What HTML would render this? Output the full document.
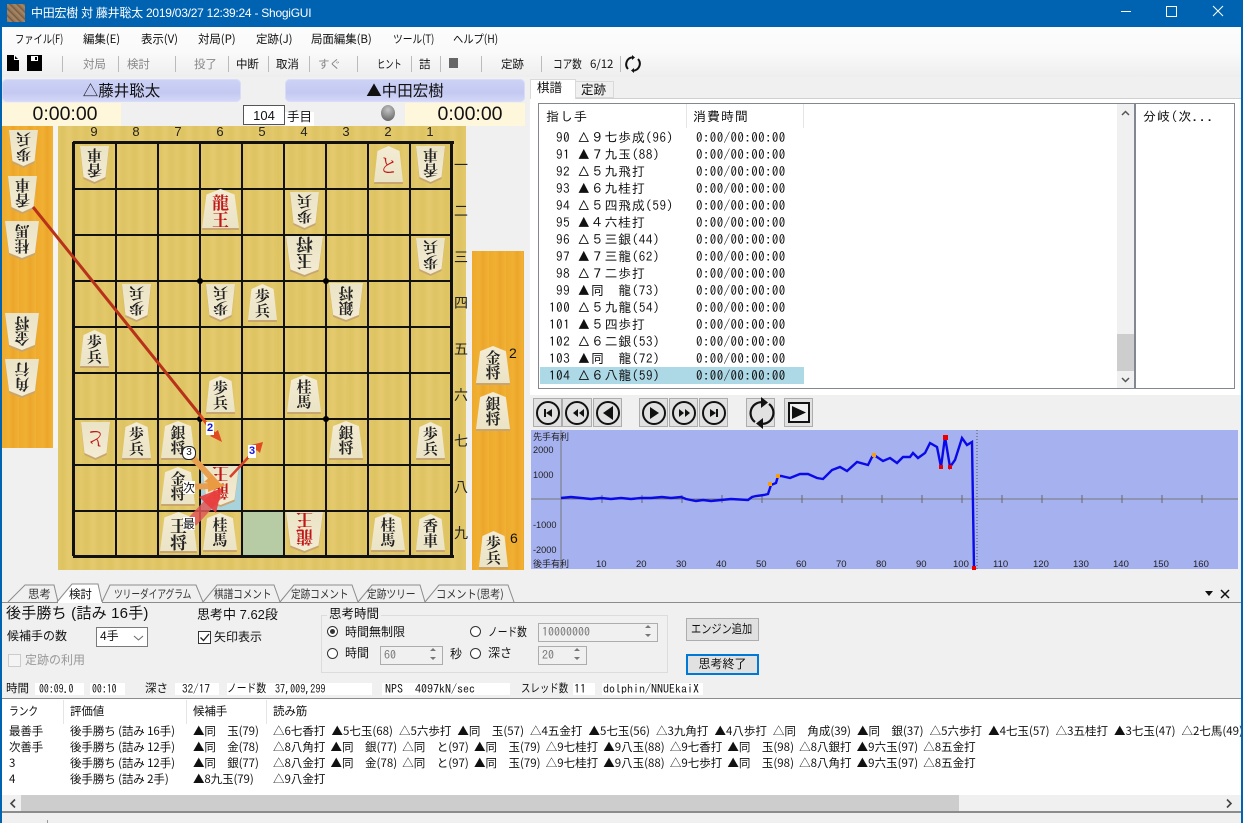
<!DOCTYPE html>
<html lang="ja"><head><meta charset="utf-8"><title>ShogiGUI</title>
<style>
html,body{margin:0;padding:0}
body{width:1243px;height:823px;overflow:hidden;position:relative;background:#f0f0f0;font:12px "Liberation Sans","Noto Sans CJK JP",sans-serif;color:#111}
div,span,b,i,svg,pre{position:absolute}
.t{white-space:nowrap;line-height:16px}
.g1{color:#888}
.wood{background:repeating-linear-gradient(90deg,#e1c768 0,#dec362 5px,#e4cb6e 11px,#dec364 17px,#e3c96b 24px)}
.hand{background:repeating-linear-gradient(90deg,#eeaa2c 0,#f0b033 7px,#eba62a 11px,#f1b236 17px)}
.v{width:2px;background:#111;top:142px;height:414px}
.h{height:2px;background:#111;left:73px;width:378px}
.n{font:13px "Liberation Sans",sans-serif;color:#222;width:20px;text-align:center;top:124px}
.k{font:14px "Noto Sans CJK JP",sans-serif;color:#222;left:453px;width:16px;text-align:center}
.dot{width:6px;height:6px;border-radius:3px;background:#000}
b{display:block;filter:drop-shadow(0 2px 0 #c8a671);font-weight:400}
b i{display:block;width:100%;height:100%;font-style:normal;background:linear-gradient(#f3ecd4,#ebe3c5);text-align:center;color:#222;font-family:"Noto Serif CJK SC","Noto Sans CJK JP",serif;font-weight:700;clip-path:polygon(50% 0,88% 14%,100% 100%,0 100%,12% 14%);padding-top:4px;box-sizing:border-box;line-height:15px;font-size:15px}
b.f i{transform:rotate(180deg)}
b.s{width:29px;height:36px;margin:-18px 0 0 -14px}
b.m{width:34px;height:37px;margin:-19px 0 0 -17px}
b.l{width:37px;height:39px;margin:-20px 0 0 -18px}
b.l i{font-size:17px;line-height:17px}
b.r i{color:#c01818}
b i.to{line-height:30px;font-size:19px;font-weight:400}
.btn{background:#e1e1e1;border:1px solid #adadad;box-sizing:border-box;text-align:center;white-space:nowrap}
.sep{width:1px;height:16px;top:56px;background:#bbb}
.lst{font:13px "IPAGothic","Noto Sans CJK JP",monospace;white-space:pre;line-height:17px;letter-spacing:.6px;margin:0}
.rd{width:11px;height:11px;border:1px solid #333;border-radius:50%;background:#fff;box-sizing:border-box}
.spin{background:#f0f0f0;border:1px solid #adadad;box-sizing:border-box;color:#777;font:12px "IPAGothic",monospace;padding-left:3px;line-height:17px}
.mono{font:12px "IPAGothic","Noto Sans CJK JP",monospace;white-space:pre;line-height:16px}
.wb{background:#fff;height:12px;top:683px}
.tb{font:11.5px "Noto Sans CJK JP",sans-serif;white-space:nowrap;line-height:16px;letter-spacing:-.1px}
.pv{word-spacing:3.5px;letter-spacing:0}
.pv2{word-spacing:2.6px;letter-spacing:0}
.sx{transform-origin:0 0}
</style></head><body>

<!-- title bar -->
<div style="left:0;top:0;width:1243px;height:27px;background:#0063b1"></div>
<div style="left:7px;top:4px;width:18px;height:18px;background:repeating-linear-gradient(45deg,#8a6a4a 0,#a88a6a 3px,#6c5038 5px)"></div>
<span class="t" style="left:31px;top:5px;color:#fff;font-size:12px;letter-spacing:-.25px">中田宏樹 対 藤井聡太 2019/03/27 12:39:24 - ShogiGUI</span>
<div style="left:1121px;top:11px;width:10px;height:1px;background:#fff"></div>
<div style="left:1166px;top:6px;width:9px;height:9px;border:1px solid #fff"></div>
<svg style="left:1212px;top:5px" width="12" height="12"><path d="M1 1L11 11M11 1L1 11" stroke="#fff" stroke-width="1"/></svg>
<div style="left:0;top:27px;width:2px;height:796px;background:#0063b1"></div>
<div style="left:1241px;top:27px;width:2px;height:796px;background:#0063b1"></div>

<!-- menu + toolbar -->
<div style="left:2px;top:27px;width:1239px;height:50px;background:linear-gradient(#fcfcfc 0,#fafafa 50%,#eeeeee 100%)"></div>
<span class="tb sx" style="left:15px;top:31px;transform:scaleX(.81)">ファイル(F)</span>
<span class="tb" style="left:83px;top:31px">編集(E)</span>
<span class="tb" style="left:141px;top:31px">表示(V)</span>
<span class="tb" style="left:198px;top:31px">対局(P)</span>
<span class="tb" style="left:256px;top:31px">定跡(J)</span>
<span class="tb" style="left:311px;top:31px">局面編集(B)</span>
<span class="tb sx" style="left:393px;top:31px;transform:scaleX(.85)">ツール(T)</span>
<span class="tb sx" style="left:453px;top:31px;transform:scaleX(.9)">ヘルプ(H)</span>

<svg style="left:6px;top:55px" width="14" height="16"><path d="M1 0H8L13 5V16H1Z" fill="#000"/><path d="M8.5 0V4.5H13" fill="none" stroke="#fff"/></svg>
<svg style="left:27px;top:55px" width="15" height="16"><path d="M0 0H15V16H0Z" fill="#000"/><rect x="4" y="1" width="7" height="5" fill="#fff"/><rect x="8" y="2" width="2" height="3" fill="#000"/></svg>
<i class="sep" style="left:62px"></i>
<span class="tb g1" style="left:83px;top:56px">対局</span><i class="sep" style="left:118px"></i>
<span class="tb g1" style="left:127px;top:56px">検討</span>
<i class="sep" style="left:175px"></i>
<span class="tb g1" style="left:194px;top:56px">投了</span><i class="sep" style="left:228px"></i>
<span class="tb" style="left:236px;top:56px">中断</span><i class="sep" style="left:268px"></i>
<span class="tb" style="left:276px;top:56px">取消</span><i class="sep" style="left:309px"></i>
<span class="tb g1" style="left:318px;top:56px">すぐ</span><i class="sep" style="left:357px"></i>
<span class="tb sx" style="left:377px;top:56px;transform:scaleX(.72)">ヒント</span><i class="sep" style="left:411px"></i>
<span class="tb" style="left:419px;top:56px">詰</span><i class="sep" style="left:440px"></i>
<div style="left:449px;top:58px;width:9px;height:10px;background:#666"></div><i class="sep" style="left:481px"></i>
<span class="tb" style="left:501px;top:56px">定跡</span><i class="sep" style="left:541px"></i>
<span class="tb sx" style="left:553px;top:56px;transform:scaleX(.84)">コア数</span>
<span class="tb" style="left:590px;top:56px">6/12</span><i class="sep" style="left:620px"></i>
<svg style="left:624px;top:55px" width="18" height="18" fill="none" stroke="#111" stroke-width="2"><path d="M4 14A7 7 0 0 1 8 2.4"/><path d="M14 4A7 7 0 0 1 10 15.6"/><path d="M8 0V5L11 2.5ZM10 18V13L7 15.5Z" fill="#111" stroke="none"/></svg>

<!-- player bars -->
<div style="left:2px;top:79px;width:239px;height:23px;border-radius:5px;background:linear-gradient(#cdd2f6,#c4c9f2 60%,#d4d8f8);box-shadow:inset 0 0 0 1px #d8dcf8"></div>
<div style="left:285px;top:79px;width:240px;height:23px;border-radius:5px;background:linear-gradient(#cdd2f6,#c4c9f2 60%,#d4d8f8);box-shadow:inset 0 0 0 1px #d8dcf8"></div>
<span class="t" style="left:2px;width:239px;text-align:center;top:81px;font:15.5px/19px 'Noto Sans CJK JP',sans-serif">△藤井聡太</span>
<span class="t" style="left:285px;width:240px;text-align:center;top:81px;font:15.5px/19px 'Noto Sans CJK JP',sans-serif">▲中田宏樹</span>
<div style="left:2px;top:103px;width:119px;height:23px;background:#fff7dc"></div>
<div style="left:405px;top:103px;width:120px;height:23px;background:#fff7dc"></div>
<span class="t" style="left:2px;width:126px;text-align:center;top:104px;font-size:19.5px;line-height:21px">0:00:00</span>
<span class="t" style="left:411px;width:118px;text-align:center;top:104px;font-size:19.5px;line-height:21px">0:00:00</span>
<div style="left:243px;top:105px;width:42px;height:20px;background:#fff;border:1px solid #555;box-sizing:border-box;text-align:center;line-height:19px;font-size:13px">104</div>
<div style="left:285px;top:112px;width:29px;height:14px;background:#fff"></div>
<span class="t" style="left:287px;top:109px;font-size:12.5px">手目</span>
<div style="left:381px;top:105px;width:14px;height:16px;border-radius:50%;background:radial-gradient(circle at 50% 30%,#c4c4c4,#777 70%,#555)"></div>

<!-- left hand -->
<div class="hand" style="left:2px;top:126px;width:51px;height:322px"></div>
<div style="left:53px;top:126px;width:5px;height:322px;background:#f4f4f4"></div>
<!-- board -->
<div class="wood" style="left:58px;top:126px;width:408px;height:447px"></div>
<div style="left:241px;top:510px;width:42px;height:46px;background:#b7cba4"></div>
<div style="left:199px;top:464px;width:42px;height:46px;background:#a9d3dc"></div>

<i class="v" style="left:72px;width:3px"></i><i class="v" style="left:115px"></i><i class="v" style="left:157px"></i><i class="v" style="left:199px"></i><i class="v" style="left:241px"></i><i class="v" style="left:283px"></i><i class="v" style="left:325px"></i><i class="v" style="left:367px"></i><i class="v" style="left:409px"></i><i class="v" style="left:450px;width:3px"></i>
<i class="h" style="top:141px;height:3px;width:381px"></i><i class="h" style="top:188px"></i><i class="h" style="top:234px"></i><i class="h" style="top:280px"></i><i class="h" style="top:326px"></i><i class="h" style="top:372px"></i><i class="h" style="top:418px"></i><i class="h" style="top:464px"></i><i class="h" style="top:510px"></i><i class="h" style="top:555px;height:3px;width:381px"></i>
<i class="dot" style="left:197px;top:278px"></i><i class="dot" style="left:323px;top:278px"></i><i class="dot" style="left:197px;top:416px"></i><i class="dot" style="left:323px;top:416px"></i>

<span class="n" style="left:84px">9</span><span class="n" style="left:126px">8</span><span class="n" style="left:168px">7</span><span class="n" style="left:210px">6</span><span class="n" style="left:252px">5</span><span class="n" style="left:294px">4</span><span class="n" style="left:336px">3</span><span class="n" style="left:378px">2</span><span class="n" style="left:420px">1</span>
<span class="k" style="top:155px">一</span><span class="k" style="top:201px">二</span><span class="k" style="top:247px">三</span><span class="k" style="top:293px">四</span><span class="k" style="top:339px">五</span><span class="k" style="top:385px">六</span><span class="k" style="top:431px">七</span><span class="k" style="top:477px">八</span><span class="k" style="top:523px">九</span>

<!-- board pieces -->
<b class="s f" style="left:94px;top:164px"><i>香<br>車</i></b>
<b class="s r" style="left:388px;top:164px"><i class="to">と</i></b>
<b class="s f" style="left:430px;top:164px"><i>香<br>車</i></b>
<b class="l r" style="left:220px;top:209px"><i>龍<br>王</i></b>
<b class="s f" style="left:304px;top:210px"><i>歩<br>兵</i></b>
<b class="l f" style="left:304px;top:256px"><i>玉<br>将</i></b>
<b class="s f" style="left:430px;top:256px"><i>歩<br>兵</i></b>
<b class="s f" style="left:136px;top:302px"><i>歩<br>兵</i></b>
<b class="s f" style="left:220px;top:302px"><i>歩<br>兵</i></b>
<b class="s" style="left:262px;top:302px"><i>歩<br>兵</i></b>
<b class="m f" style="left:346px;top:302px"><i>銀<br>将</i></b>
<b class="s" style="left:94px;top:348px"><i>歩<br>兵</i></b>
<b class="s" style="left:220px;top:394px"><i>歩<br>兵</i></b>
<b class="m" style="left:304px;top:394px"><i>桂<br>馬</i></b>
<b class="s f r" style="left:95px;top:440px"><i class="to">と</i></b>
<b class="s" style="left:136px;top:440px"><i>歩<br>兵</i></b>
<b class="m" style="left:178px;top:440px"><i>銀<br>将</i></b>
<b class="m" style="left:346px;top:440px"><i>銀<br>将</i></b>
<b class="s" style="left:430px;top:440px"><i>歩<br>兵</i></b>
<b class="m" style="left:178px;top:486px"><i>金<br>将</i></b>
<b class="l f r" style="left:220px;top:486px"><i>龍<br>王</i></b>
<b class="l" style="left:178px;top:532px"><i>王<br>将</i></b>
<b class="m" style="left:220px;top:532px"><i>桂<br>馬</i></b>
<b class="l f r" style="left:304px;top:532px"><i>龍<br>王</i></b>
<b class="m" style="left:388px;top:532px"><i>桂<br>馬</i></b>
<b class="s" style="left:430px;top:532px"><i>香<br>車</i></b>

<!-- gote hand -->
<b class="s f" style="left:23px;top:148px"><i>歩<br>兵</i></b>
<b class="s f" style="left:22px;top:194px"><i>香<br>車</i></b>
<b class="m f" style="left:22px;top:240px"><i>桂<br>馬</i></b>
<b class="m f" style="left:22px;top:332px"><i>金<br>将</i></b>
<b class="m f" style="left:22px;top:378px"><i>角<br>行</i></b>

<!-- sente hand -->
<div class="hand" style="left:472px;top:251px;width:52px;height:322px"></div>
<b class="m" style="left:493px;top:365px"><i>金<br>将</i></b>
<b class="m" style="left:493px;top:411px"><i>銀<br>将</i></b>
<b class="s" style="left:493px;top:549px"><i>歩<br>兵</i></b>
<span class="t" style="left:509px;top:345px;font-size:14px;color:#111">2</span>
<span class="t" style="left:510px;top:530px;font-size:14px;color:#111">6</span>

<!-- arrows -->
<svg style="left:0;top:0" width="530" height="580" fill="none">
 <path d="M33 207L200 415" stroke="#b8321a" stroke-width="3"/>
 <path d="M200 415L216 436" stroke="#e04a20" stroke-width="3"/>
 <path d="M222 442L210 436L218 430Z" fill="#e04a20"/>
 <path d="M230 477L258 447" stroke="#d8402a" stroke-width="2.5"/>
 <path d="M263 442L251 445L260 453Z" fill="#e04a20"/>
 <path d="M193 458L217 484" stroke="#e8a050" stroke-width="6"/>
 <path d="M224 487L204 482L212 475Z" fill="#ea9a40"/>
 <path d="M188 487L210 486" stroke="#e8a050" stroke-width="6"/>
 <path d="M226 485L208 480V492Z" fill="#ea9a40"/>
 <path d="M192 522L218 494" stroke="#e05858" stroke-width="11" opacity=".85"/>
 <path d="M222 488L199 497L216 513Z" fill="#e83c3c" opacity=".9"/>
</svg>
<span class="t" style="left:206px;top:422px;background:#fff;color:#1616d8;font:bold 11px/13px 'Liberation Sans',sans-serif;padding:0 1px">2</span>
<span class="t" style="left:248px;top:445px;background:#fff;color:#1616d8;font:bold 11px/13px 'Liberation Sans',sans-serif;padding:0 1px">3</span>
<span class="t" style="left:182px;top:446px;width:12px;height:12px;background:#fff;border-radius:6px;border:1px solid #222;font:10px/12px 'Liberation Sans',sans-serif;text-align:center">3</span>
<span class="t" style="left:183px;top:481px;background:#fff;font:12px/13px 'Noto Sans CJK JP',sans-serif">次</span>
<span class="t" style="left:183px;top:517px;background:#fff;font:12px/13px 'Noto Sans CJK JP',sans-serif">最</span>

<!-- kifu tabs -->
<div style="left:530px;top:98px;width:711px;height:1px;background:#d0d0d0"></div>
<div style="left:575px;top:81px;width:39px;height:17px;background:#f0f0f0;border:1px solid #d9d9d9;box-sizing:border-box"></div>
<div style="left:530px;top:79px;width:46px;height:20px;background:#fff;border:1px solid #d9d9d9;border-bottom:0;box-sizing:border-box"></div>
<span class="t" style="left:537px;top:80px;font-size:12.5px">棋譜</span>
<span class="t" style="left:581px;top:82px;font-size:12.5px">定跡</span>
<div style="left:530px;top:99px;width:711px;height:296px;background:#fff"></div>
<!-- kifu list -->
<div style="left:538px;top:103px;width:597px;height:286px;background:#fff;border:1px solid #828790;box-sizing:border-box"></div>
<div style="left:1135px;top:103px;width:100px;height:286px;background:#fff;border:1px solid #828790;box-sizing:border-box"></div>
<span class="lst" style="left:1143px;top:108px;letter-spacing:1px">分岐(次...</span>
<div style="left:686px;top:104px;width:1px;height:24px;background:#e5e5e5"></div>
<div style="left:803px;top:104px;width:1px;height:24px;background:#e5e5e5"></div>
<span class="lst" style="left:546px;top:108px;letter-spacing:1px">指し手</span>
<span class="lst" style="left:693px;top:108px;letter-spacing:1px">消費時間</span>
<div style="left:540px;top:367px;width:264px;height:17px;background:#add8e6"></div>
<pre class="lst" style="left:556px;top:129px">90 △９七歩成(96)
91 ▲７九玉(88)
92 △５九飛打
93 ▲６九桂打
94 △５四飛成(59)
95 ▲４六桂打
96 △５三銀(44)
97 ▲７三龍(62)
98 △７二歩打
99 ▲同　龍(73)</pre>
<pre class="lst" style="left:549px;top:299px">100 △５九龍(54)
101 ▲５四歩打
102 △６二銀(53)
103 ▲同　龍(72)
104 △６八龍(59)</pre>
<pre class="lst" style="left:696px;top:129px;letter-spacing:.4px">0:00/00:00:00
0:00/00:00:00
0:00/00:00:00
0:00/00:00:00
0:00/00:00:00
0:00/00:00:00
0:00/00:00:00
0:00/00:00:00
0:00/00:00:00
0:00/00:00:00
0:00/00:00:00
0:00/00:00:00
0:00/00:00:00
0:00/00:00:00
0:00/00:00:00</pre>
<!-- list scrollbar -->
<div style="left:1117px;top:104px;width:17px;height:284px;background:#f0f0f0"></div>
<div style="left:1117px;top:334px;width:17px;height:37px;background:#cdcdcd"></div>
<svg style="left:1117px;top:104px" width="17" height="284" fill="none" stroke="#555" stroke-width="1.5"><path d="M5 11L8.5 7.5L12 11"/><path d="M5 274L8.5 277.5L12 274"/></svg>

<!-- playback -->
<div class="btn" style="left:533px;top:398px;width:29px;height:29px"></div>
<div class="btn" style="left:562px;top:398px;width:30px;height:29px"></div>
<div class="btn" style="left:593px;top:398px;width:29px;height:29px"></div>
<div class="btn" style="left:639px;top:398px;width:29px;height:29px"></div>
<div class="btn" style="left:669px;top:398px;width:29px;height:29px"></div>
<div class="btn" style="left:699px;top:398px;width:29px;height:29px"></div>
<div class="btn" style="left:746px;top:398px;width:29px;height:29px"></div>
<div class="btn" style="left:784px;top:398px;width:29px;height:29px"></div>
<svg style="left:530px;top:395px" width="290" height="36" fill="#111">
 <g fill="none" stroke="#111" stroke-width="2"><circle cx="18" cy="18" r="11"/><circle cx="47" cy="18" r="11"/><circle cx="78" cy="18" r="11"/><circle cx="124" cy="18" r="11"/><circle cx="154" cy="18" r="11"/><circle cx="184" cy="18" r="11"/></g>
 <path d="M14 14h2v8h-2ZM22 14v8l-6-4Z"/>
 <path d="M48 14v8l-5-4ZM54 14v8l-5-4Z"/>
 <path d="M83 11v14l-10-7Z"/>
 <path d="M120 12v12l9-6Z"/>
 <path d="M149 14v8l5-4ZM155 14v8l5-4Z"/>
 <path d="M180 14v8l6-4ZM186 14h2v8h-2Z"/>
 <g fill="none" stroke="#111" stroke-width="2.2"><path d="M225 27A11 11 0 0 1 232 7.2"/><path d="M239 9A11 11 0 0 1 232 28.8"/></g>
 <path d="M231 2V13L238 7.5ZM233 34V23L226 28.5Z"/>
 <rect x="259" y="8" width="20" height="19" fill="#eee" stroke="#111" stroke-width="2"/>
 <path d="M262 11V24L276 17.5Z"/>
</svg>

<!-- graph -->
<svg style="left:531px;top:430px" width="707" height="140" font-family="Liberation Sans,Noto Sans CJK JP,sans-serif" font-size="9.2" fill="#222">
 <rect width="707" height="139" fill="#a6b1ef"/>
 <path d="M0 69H707" stroke="#777" stroke-width="1"/>
 <path d="M30 0V139" stroke="#777" stroke-width="1"/>
 <path d="M446 0V139" stroke="#555" stroke-dasharray="1 2"/>
 <path d="M71 65v8M111 65v8M151 65v8M191 65v8M231 65v8M271 65v8M311 65v8M351 65v8M391 65v8M431 65v8M471 65v8M511 65v8M551 65v8M591 65v8M631 65v8M671 65v8" stroke="#666"/>
 <text x="2" y="10" font-size="9">先手有利</text>
 <text x="2" y="137" font-size="9">後手有利</text>
 <text x="2" y="23">2000</text><text x="2" y="48">1000</text><text x="2" y="98">-1000</text><text x="2" y="123">-2000</text>
 <g font-size="9.5"><text x="65" y="137">10</text><text x="105" y="137">20</text><text x="145" y="137">30</text><text x="185" y="137">40</text><text x="225" y="137">50</text><text x="265" y="137">60</text><text x="305" y="137">70</text><text x="345" y="137">80</text><text x="385" y="137">90</text><text x="422" y="137">100</text><text x="462" y="137">110</text><text x="502" y="137">120</text><text x="542" y="137">130</text><text x="582" y="137">140</text><text x="622" y="137">150</text><text x="662" y="137">160</text></g>
 <path d="M30 68L40 67L50 68L60 69L70 68L80 69L90 68L100 69L110 68L120 68L131 67L140 68L150 67L155 69L165 71L172 70L180 71L190 70L200 69L217 70L221 67L225 66L233 65L237 64L240 55L245 53L247 46L250 46L259 48L269 44L277 44L286 48L292 49L301 40L309 37L316 41L326 32L337 35L341 27L343 25L352 31L359 28L366 33L372 27L379 27L382 23L387 28L394 23L399 13L406 17L410 37L414 7L419 37L424 30L431 8L436 15L441 12L443 139" fill="none" stroke="#0a0ae8" stroke-width="2.4"/>
 <g fill="#f5a010"><rect x="237" y="52" width="4" height="4"/><rect x="245" y="44" width="4" height="4"/><rect x="341" y="23" width="4" height="4"/></g>
 <g fill="#e80000"><rect x="412" y="5" width="5" height="5"/><rect x="408" y="35" width="4" height="4"/><rect x="417" y="35" width="4" height="4"/><rect x="441" y="136" width="4" height="4"/></g>
</svg>

<!-- lower tabs -->
<div style="left:2px;top:570px;width:1239px;height:253px;background:#f0f0f0"></div>
<svg style="left:0;top:582px" width="530" height="22" fill="#f0f0f0" stroke="#8c8c8c">
 <path d="M8 20L25 3H54L58 20"/>
 <path d="M102 20L110 3H196L203 20"/>
 <path d="M203 20L217 3H274L280 20"/>
 <path d="M280 20L294 3H352L358 20"/>
 <path d="M358 20L372 3H420L425 20"/>
 <path d="M425 20L439 3H508L514 20"/>
 <path d="M57 20L72 2H98L102 20" fill="#fff"/>
</svg>
<div style="left:2px;top:602px;width:1239px;height:1px;background:#8c8c8c"></div>
<div style="left:58px;top:602px;width:44px;height:1px;background:#fff"></div>
<span class="tb" style="left:28px;top:586px;color:#333">思考</span>
<span class="tb" style="left:69px;top:586px">検討</span>
<span class="tb sx" style="left:114px;top:586px;color:#333;transform:scaleX(.76)">ツリーダイアグラム</span>
<span class="tb sx" style="left:214px;top:586px;color:#333;transform:scaleX(.84)">棋譜コメント</span>
<span class="tb sx" style="left:291px;top:586px;color:#333;transform:scaleX(.84)">定跡コメント</span>
<span class="tb sx" style="left:367px;top:586px;color:#333;transform:scaleX(.85)">定跡ツリー</span>
<span class="tb sx" style="left:436px;top:586px;color:#333;transform:scaleX(.89)">コメント(思考)</span>
<svg style="left:1204px;top:588px" width="26" height="12"><path d="M1 3H9L5 8Z" fill="#111"/><path d="M17 2L25 10M25 2L17 10" stroke="#111" stroke-width="1.5"/></svg>

<!-- engine panel -->
<span class="t" style="left:6px;top:605px;font-size:15px;line-height:18px;letter-spacing:.2px">後手勝ち (詰み 16手)</span>
<span class="t" style="left:7px;top:628px;font-size:12px">候補手の数</span>
<div style="left:96px;top:627px;width:52px;height:20px;background:#fff;border:1px solid #7a7a7a;box-sizing:border-box;font-size:12px;line-height:17px;padding-left:3px">4手</div>
<svg style="left:133px;top:635px" width="11" height="6" fill="none" stroke="#666"><path d="M1 1L5.5 5L10 1"/></svg>
<div style="left:8px;top:654px;width:13px;height:13px;border:1px solid #ccc;background:#f4f4f4;box-sizing:border-box"></div>
<span class="t" style="left:25px;top:652px;font-size:12px;color:#999">定跡の利用</span>
<span class="t" style="left:197px;top:607px;font-size:13px">思考中 7.62段</span>
<div style="left:198px;top:631px;width:13px;height:13px;border:1px solid #333;background:#fff;box-sizing:border-box"></div>
<svg style="left:198px;top:631px" width="13" height="13" fill="none" stroke="#222" stroke-width="1.3"><path d="M2.5 6.5L5.5 9.5L11 3"/></svg>
<span class="t" style="left:214px;top:629px;font-size:12px">矢印表示</span>

<div style="left:321px;top:615px;width:347px;height:58px;border:1px solid #dcdcdc;box-sizing:border-box"></div>
<span class="t" style="left:327px;top:606px;background:#f0f0f0;padding:0 2px;font-size:12.5px">思考時間</span>
<i class="rd" style="left:327px;top:626px"></i><i style="left:330px;top:629px;width:5px;height:5px;border-radius:50%;background:#333"></i>
<span class="t" style="left:345px;top:624px;font-size:12px">時間無制限</span>
<i class="rd" style="left:327px;top:648px"></i>
<span class="t" style="left:345px;top:645px;font-size:12px">時間</span>
<div class="spin" style="left:380px;top:646px;width:63px;height:19px">60</div>
<span class="t" style="left:450px;top:646px;font-size:12px">秒</span>
<i class="rd" style="left:470px;top:626px"></i>
<span class="t sx" style="left:488px;top:624px;font-size:12px;transform:scaleX(.81)">ノード数</span>
<i class="rd" style="left:470px;top:648px"></i>
<span class="t" style="left:488px;top:645px;font-size:12px">深さ</span>
<div class="spin" style="left:538px;top:623px;width:120px;height:19px">10000000</div>
<div class="spin" style="left:538px;top:646px;width:49px;height:19px">20</div>
<svg style="left:320px;top:620px" width="350" height="50" fill="#777"><path d="M325 8l3-3l3 3ZM325 14l3 3l3-3Z"/><path d="M110 31l3-3l3 3ZM110 37l3 3l3-3Z"/><path d="M254 31l3-3l3 3ZM254 37l3 3l3-3Z"/></svg>
<div class="btn" style="left:686px;top:618px;width:73px;height:23px"></div>
<span class="t sx" style="left:691px;top:621px;font-size:12px;transform:scaleX(.85)">エンジン追加</span>
<div class="btn" style="left:686px;top:654px;width:73px;height:21px;line-height:17px;font-size:12px;border:2px solid #0078d7">思考終了</div>

<!-- status row -->
<div class="wb" style="left:35px;width:49px"></div><div class="wb" style="left:90px;width:35px"></div>
<div class="wb" style="left:175px;width:44px"></div><div class="wb" style="left:227px;width:145px"></div>
<div class="wb" style="left:382px;width:128px"></div><div class="wb" style="left:573px;width:22px"></div><div class="wb" style="left:602px;width:101px"></div>
<span class="t" style="left:6px;top:681px;font-size:11.5px">時間</span>
<span class="mono sx" style="left:39px;top:681px;transform:scaleX(.82)">00:09.0</span>
<span class="mono sx" style="left:92px;top:681px;transform:scaleX(.82)">00:10</span>
<span class="t" style="left:145px;top:681px;font-size:11.5px">深さ</span>
<span class="mono sx" style="left:182px;top:681px;transform:scaleX(.93)">32/17</span>
<span class="t sx" style="left:227px;top:681px;font-size:11.5px;transform:scaleX(.85)">ノード数</span>
<span class="mono sx" style="left:275px;top:681px;transform:scaleX(.84)">37,009,299</span>
<span class="mono" style="left:385px;top:681px">NPS  4097kN/sec</span>
<span class="t sx" style="left:521px;top:681px;font-size:11.5px;transform:scaleX(.82)">スレッド数</span>
<span class="mono" style="left:574px;top:681px">11</span>
<span class="mono" style="left:603px;top:681px">dolphin/NNUEkaiX</span>

<!-- pv table -->
<div style="left:2px;top:698px;width:1239px;height:115px;background:#fff;border-top:1px solid #8c8c8c;border-bottom:2px solid #8c8c8c;box-sizing:border-box"></div>
<div style="left:63px;top:700px;width:1px;height:24px;background:#e5e5e5"></div>
<div style="left:186px;top:700px;width:1px;height:24px;background:#e5e5e5"></div>
<div style="left:266px;top:700px;width:1px;height:24px;background:#e5e5e5"></div>
<span class="tb sx" style="left:9px;top:703px;transform:scaleX(.85)">ランク</span><span class="tb" style="left:70px;top:703px">評価値</span><span class="tb" style="left:193px;top:703px">候補手</span><span class="tb" style="left:273px;top:703px">読み筋</span>
<div style="left:0;top:723px;width:1241px;height:72px;overflow:hidden;font:11.5px 'Noto Sans CJK JP',sans-serif">
 <span class="tb" style="left:9px;top:0">最善手</span><span class="tb" style="left:70px;top:0">後手勝ち (詰み 16手)</span><span class="tb" style="left:193px;top:0">▲同　玉(79)</span>
 <span class="tb pv" style="left:273px;top:0">△6七香打 ▲5七玉(68) △5六歩打 ▲同　玉(57) △4五金打 ▲5七玉(56) △3九角打 ▲4八歩打 △同　角成(39) ▲同　銀(37) △5六歩打 ▲4七玉(57) △3五桂打 ▲3七玉(47) △2七馬(49)</span>
 <span class="tb" style="left:9px;top:16px">次善手</span><span class="tb" style="left:70px;top:16px">後手勝ち (詰み 12手)</span><span class="tb" style="left:193px;top:16px">▲同　金(78)</span>
 <span class="tb pv2" style="left:273px;top:16px">△8八角打 ▲同　銀(77) △同　と(97) ▲同　玉(79) △9七桂打 ▲9八玉(88) △9七香打 ▲同　玉(98) △8八銀打 ▲9六玉(97) △8五金打</span>
 <span class="tb" style="left:9px;top:32px">3</span><span class="tb" style="left:70px;top:32px">後手勝ち (詰み 12手)</span><span class="tb" style="left:193px;top:32px">▲同　銀(77)</span>
 <span class="tb pv2" style="left:273px;top:32px">△8八金打 ▲同　金(78) △同　と(97) ▲同　玉(79) △9七桂打 ▲9八玉(88) △9七歩打 ▲同　玉(98) △8八角打 ▲9六玉(97) △8五金打</span>
 <span class="tb" style="left:9px;top:48px">4</span><span class="tb" style="left:70px;top:48px">後手勝ち (詰み 2手)</span><span class="tb" style="left:193px;top:48px">▲8九玉(79)</span>
 <span class="tb pv" style="left:273px;top:48px">△9八金打</span>
</div>
<div style="left:2px;top:795px;width:1239px;height:16px;background:#f0f0f0"></div>
<div style="left:21px;top:795px;width:938px;height:16px;background:#cdcdcd"></div>
<svg style="left:6px;top:798px" width="1230" height="11" fill="none" stroke="#444" stroke-width="1.6"><path d="M9 1.5L5 5.5L9 9.5"/><path d="M1221 1.5L1225 5.5L1221 9.5"/></svg>
<div style="left:47px;top:820px;width:1px;height:3px;background:#999"></div>
</body></html>
